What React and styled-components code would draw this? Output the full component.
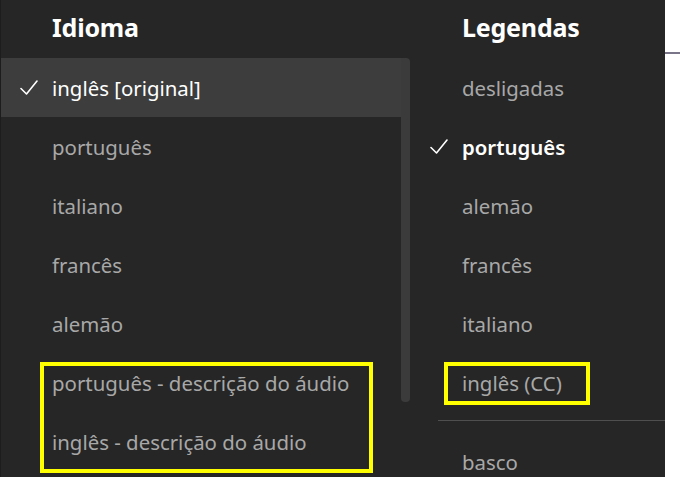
import React from "react";
import styled, { createGlobalStyle } from "styled-components";

const Global = createGlobalStyle`
  html, body { margin: 0; padding: 0; background: #ffffff; }
  body { font-family: "Noto Sans", "Open Sans", sans-serif; }
`;

const Screen = styled.div`
  display: flex;
  width: 680px;
  height: 477px;
  overflow: hidden;
`;

const Panel = styled.div`
  display: flex;
  width: 665px;
  height: 477px;
  background: #262626;
  border-left: 1px solid #1d1d1d;
  box-sizing: border-box;
  overflow: hidden;
`;

const Side = styled.div`
  flex: 1;
  background: #ffffff;
  padding-top: 52px;
`;

const SideRule = styled.div`
  height: 2px;
  background: #7a7588;
`;

const Column = styled.div`
  position: relative;
  display: flex;
  flex-direction: column;
  width: ${(p) => p.$w}px;
  flex: none;
  height: 477px;
  overflow: hidden;
`;

const Header = styled.div`
  height: 58px;
  flex: none;
  display: flex;
  align-items: center;
  padding-left: ${(p) => p.$pad}px;
  padding-bottom: 4px;
  box-sizing: border-box;
  color: #ffffff;
  font-size: 25px;
  font-weight: 700;
  letter-spacing: -0.2px;
`;

const ListArea = styled.div`
  display: flex;
  flex: none;
`;

const Rows = styled.div`
  display: flex;
  flex-direction: column;
  flex: none;
  width: ${(p) => p.$w}px;
`;

const Row = styled.div`
  display: flex;
  align-items: center;
  height: 59px;
  flex: none;
  background: ${(p) => (p.$active ? "#3d3d3d" : "transparent")};
  color: ${(p) => (p.$selected ? "#ffffff" : "#a8a8a8")};
  font-size: 20.4px;
  font-weight: ${(p) => (p.$bold ? 600 : 400)};
  white-space: nowrap;
`;

const CheckSlot = styled.span`
  width: 51px;
  flex: none;
  display: flex;
  justify-content: flex-start;
  padding-left: 19px;
  box-sizing: border-box;
`;

const Track = styled.div`
  width: 9px;
  padding-right: 1px;
`;

const Thumb = styled.div`
  width: 9px;
  height: 344px;
  background: #3b3b3b;
  border-radius: 0 4px 4px 4px;
`;

const Separator = styled.div`
  height: 1px;
  flex: none;
  background: #4f4f4f;
  margin: 8px 0 11px 27px;
`;

const Highlight = styled.div`
  position: absolute;
  left: ${(p) => p.$x}px;
  top: ${(p) => p.$y}px;
  width: ${(p) => p.$w}px;
  height: ${(p) => p.$h}px;
  border: 4px solid #ffff00;
  box-sizing: border-box;
  pointer-events: none;
`;

const Check = () => (
  <svg width="18" height="17" viewBox="0 0 18 17" fill="none">
    <polyline
      points="1,9.5 6.5,15 17,2"
      stroke="#ffffff"
      strokeWidth="1.6"
      strokeLinecap="round"
      strokeLinejoin="round"
    />
  </svg>
);

const Item = ({ label, checked, active, bold }) => (
  <Row $active={active} $selected={checked} $bold={bold}>
    <CheckSlot>{checked ? <Check /> : null}</CheckSlot>
    {label}
  </Row>
);

const audio = [
  { label: "inglês [original]", checked: true, active: true },
  { label: "português" },
  { label: "italiano" },
  { label: "francês" },
  { label: "alemão" },
  { label: "português - descrição do áudio" },
  { label: "inglês - descrição do áudio" },
];

const subs = [
  { label: "desligadas" },
  { label: "português", checked: true, bold: true },
  { label: "alemão" },
  { label: "francês" },
  { label: "italiano" },
  { label: "inglês (CC)" },
];

export default function App() {
  return (
    <>
      <Global />
      <Screen>
        <Panel>
          <Column $w={410}>
            <Header $pad={51}>Idioma</Header>
            <ListArea>
              <Rows $w={400}>
                {audio.map((a) => (
                  <Item key={a.label} {...a} />
                ))}
              </Rows>
              <Track>
                <Thumb />
              </Track>
            </ListArea>
            <Highlight $x={39} $y={362} $w={333} $h={111} />
          </Column>
          <Column $w={254}>
            <Header $pad={51}>Legendas</Header>
            <Rows $w={254}>
              {subs.map((s) => (
                <Item key={s.label} {...s} />
              ))}
              <Separator />
              <Item label="basco" />
            </Rows>
            <Highlight $x={33} $y={362} $w={146} $h={43} />
          </Column>
        </Panel>
        <Side>
          <SideRule />
        </Side>
      </Screen>
    </>
  );
}
